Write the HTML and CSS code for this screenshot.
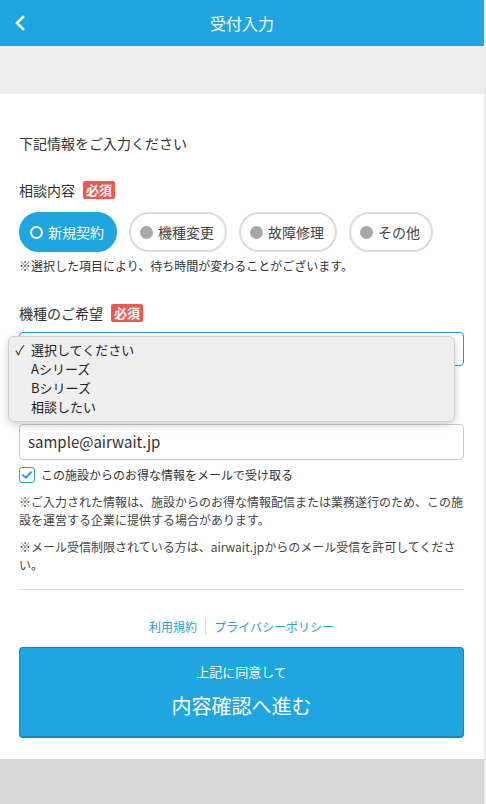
FILE: index.html
```html
<!DOCTYPE html>
<html lang="ja">
<head>
<meta charset="utf-8">
<title>受付入力</title>
<link rel="stylesheet" href="styles.css">
</head>
<body>
<div class="page">
  <header class="topbar">
    <span class="back">
      <svg width="12" height="16" viewBox="0 0 12 16"><path d="M9 2 L3 8 L9 14" fill="none" stroke="#fff" stroke-width="2.6" stroke-linecap="square"/></svg>
    </span>
    <h1 class="title">受付入力</h1>
  </header>
  <div class="band"></div>
  <main class="content">
    <p class="intro">下記情報をご入力ください</p>

    <div class="label-row label-first"><span class="label">相談内容</span><span class="badge">必須</span></div>
    <div class="pills">
      <span class="pill selected"><span class="dot ring"></span>新規契約</span>
      <span class="pill"><span class="dot"></span>機種変更</span>
      <span class="pill"><span class="dot"></span>故障修理</span>
      <span class="pill"><span class="dot"></span>その他</span>
    </div>
    <p class="note">※選択した項目により、待ち時間が変わることがございます。</p>

    <div class="label-row label-second"><span class="label">機種のご希望</span><span class="badge">必須</span></div>
    <div class="select-wrap">
      <div class="select"></div>
      <div class="dropdown">
        <div class="opt checked"><span class="check">✓</span>選択してください</div>
        <div class="opt"><span class="check"></span>Aシリーズ</div>
        <div class="opt"><span class="check"></span>Bシリーズ</div>
        <div class="opt"><span class="check"></span>相談したい</div>
      </div>
    </div>

    <div class="label-row label-mail"><span class="label">メールアドレス（通知先）</span></div>
    <div class="input">sample@airwait.jp</div>

    <label class="checkrow">
      <span class="checkbox">
        <svg width="10" height="8" viewBox="0 0 10 8"><path d="M1 4.2 L3.8 6.8 L9 1.2" fill="none" stroke="#2a9fd8" stroke-width="2" stroke-linecap="round" stroke-linejoin="round"/></svg>
      </span>
      <span>この施設からのお得な情報をメールで受け取る</span>
    </label>

    <p class="small p1">※ご入力された情報は、施設からのお得な情報配信または業務遂行のため、この施設を運営する企業に提供する場合があります。</p>
    <p class="small p2">※メール受信制限されている方は、airwait.jpからのメール受信を許可してください。</p>

    <hr class="rule">

    <nav class="links"><a>利用規約</a><span class="sep"></span><a>プライバシーポリシー</a></nav>

    <button class="submit"><span class="sub1">上記に同意して</span><span class="sub2">内容確認へ進む</span></button>
  </main>
  <div class="footer-band"></div>
</div>
</body>
</html>
```

FILE: styles.css
```css
html {
  background: #ebebeb;
}
body {
  margin: 0;
  width: 484px;
  font-family: "Noto Sans CJK JP", "Noto Sans", sans-serif;
  color: #333;
}
.page {
  background: #fff;
}
.topbar {
  height: 46px;
  background: #1fa6e0;
  display: flex;
  align-items: center;
  justify-content: center;
  position: relative;
}
.back {
  position: absolute;
  left: 14px;
  top: 15px;
  display: flex;
}
.title {
  margin: 0;
  font-size: 16px;
  font-weight: 400;
  color: #fff;
  line-height: 22px;
}
.band {
  height: 48px;
  background: #ededed;
}
.content {
  padding: 38px 20px 21px 19px;
}
.intro {
  margin: 0;
  font-size: 14px;
  line-height: 22px;
}
.label-row {
  display: flex;
  align-items: center;
  gap: 8px;
  height: 22px;
}
.label {
  font-size: 14px;
  line-height: 22px;
}
.badge {
  background: #f0574f;
  color: #fff;
  font-size: 13px;
  font-weight: 700;
  line-height: 18px;
  padding: 0 3px;
  border-radius: 2px;
}
.label-first {
  margin-top: 25px;
}
.pills {
  display: flex;
  gap: 12px;
  margin-top: 11px;
}
.pill {
  height: 40px;
  box-sizing: border-box;
  border: 2px solid #dcdcdc;
  border-radius: 20px;
  display: flex;
  align-items: center;
  gap: 5px;
  padding: 0 11px 0 9px;
  font-size: 14px;
  color: #444;
  background: #fff;
}
.pill.selected {
  background: #1fa6e0;
  border-color: #1fa6e0;
  color: #fff;
}
.dot {
  width: 13px;
  height: 13px;
  border-radius: 50%;
  background: #a8a8a8;
  box-sizing: border-box;
}
.dot.ring {
  background: transparent;
  border: 2px solid #fff;
}
.note {
  margin: 5px 0 0;
  font-size: 12px;
  line-height: 18px;
}
.label-second {
  margin-top: 27px;
}
.select-wrap {
  position: relative;
  margin-top: 8px;
}
.select {
  height: 34px;
  box-sizing: border-box;
  border: 1px solid #2196d8;
  border-radius: 4px;
  background: #fff;
}
.dropdown {
  position: absolute;
  left: -11px;
  top: 4px;
  width: 447px;
  box-sizing: border-box;
  padding: 3px 0 5px;
  background: #efefef;
  border: 1px solid #cfcfcf;
  border-radius: 6px;
  box-shadow: 0 3px 10px rgba(0, 0, 0, 0.18);
  z-index: 2;
}
.opt {
  display: flex;
  align-items: center;
  font-size: 13px;
  line-height: 19px;
  color: #222;
}
.check {
  width: 22px;
  text-align: center;
  font-size: 13px;
}
.label-mail {
  margin-top: 34px;
}
.input {
  margin-top: 2px;
  height: 36px;
  box-sizing: border-box;
  border: 1px solid #cccccc;
  border-radius: 4px;
  padding: 0 8px;
  font-size: 15px;
  line-height: 34px;
  color: #333;
}
.checkrow {
  display: flex;
  align-items: center;
  gap: 6px;
  margin-top: 7px;
  font-size: 12px;
  line-height: 16px;
}
.checkbox {
  width: 16px;
  height: 16px;
  box-sizing: border-box;
  border: 1.5px solid #2a9fd8;
  border-radius: 3px;
  display: flex;
  align-items: center;
  justify-content: center;
  background: #fff;
}
.small {
  margin: 0;
  font-size: 12px;
  line-height: 18px;
  color: #444;
}
.p1 {
  margin-top: 10px;
}
.p2 {
  margin-top: 9px;
}
.rule {
  margin: 15px 0 0;
  border: 0;
  border-top: 1px solid #dcdcdc;
  height: 0;
}
.links {
  margin-top: 28px;
  display: flex;
  justify-content: center;
  align-items: center;
  gap: 8px;
  font-size: 12px;
  line-height: 18px;
}
.links a {
  color: #2a9fd8;
}
.sep {
  width: 1px;
  height: 16px;
  background: #d8d8d8;
}
.submit {
  margin-top: 11px;
  width: 100%;
  height: 91px;
  box-sizing: border-box;
  background: #1fa6e0;
  border: 1px solid #1b85bb;
  border-bottom-width: 2px;
  border-right-width: 1.5px;
  border-radius: 4px;
  color: #fff;
  font-family: inherit;
  display: flex;
  flex-direction: column;
  align-items: center;
  justify-content: center;
  gap: 11px;
  padding: 0 0 2px;
}
.sub1 {
  font-size: 13px;
  line-height: 18px;
}
.sub2 {
  font-size: 20px;
  line-height: 28px;
}
.footer-band {
  height: 47px;
  background: #d8d8d8;
}
```
